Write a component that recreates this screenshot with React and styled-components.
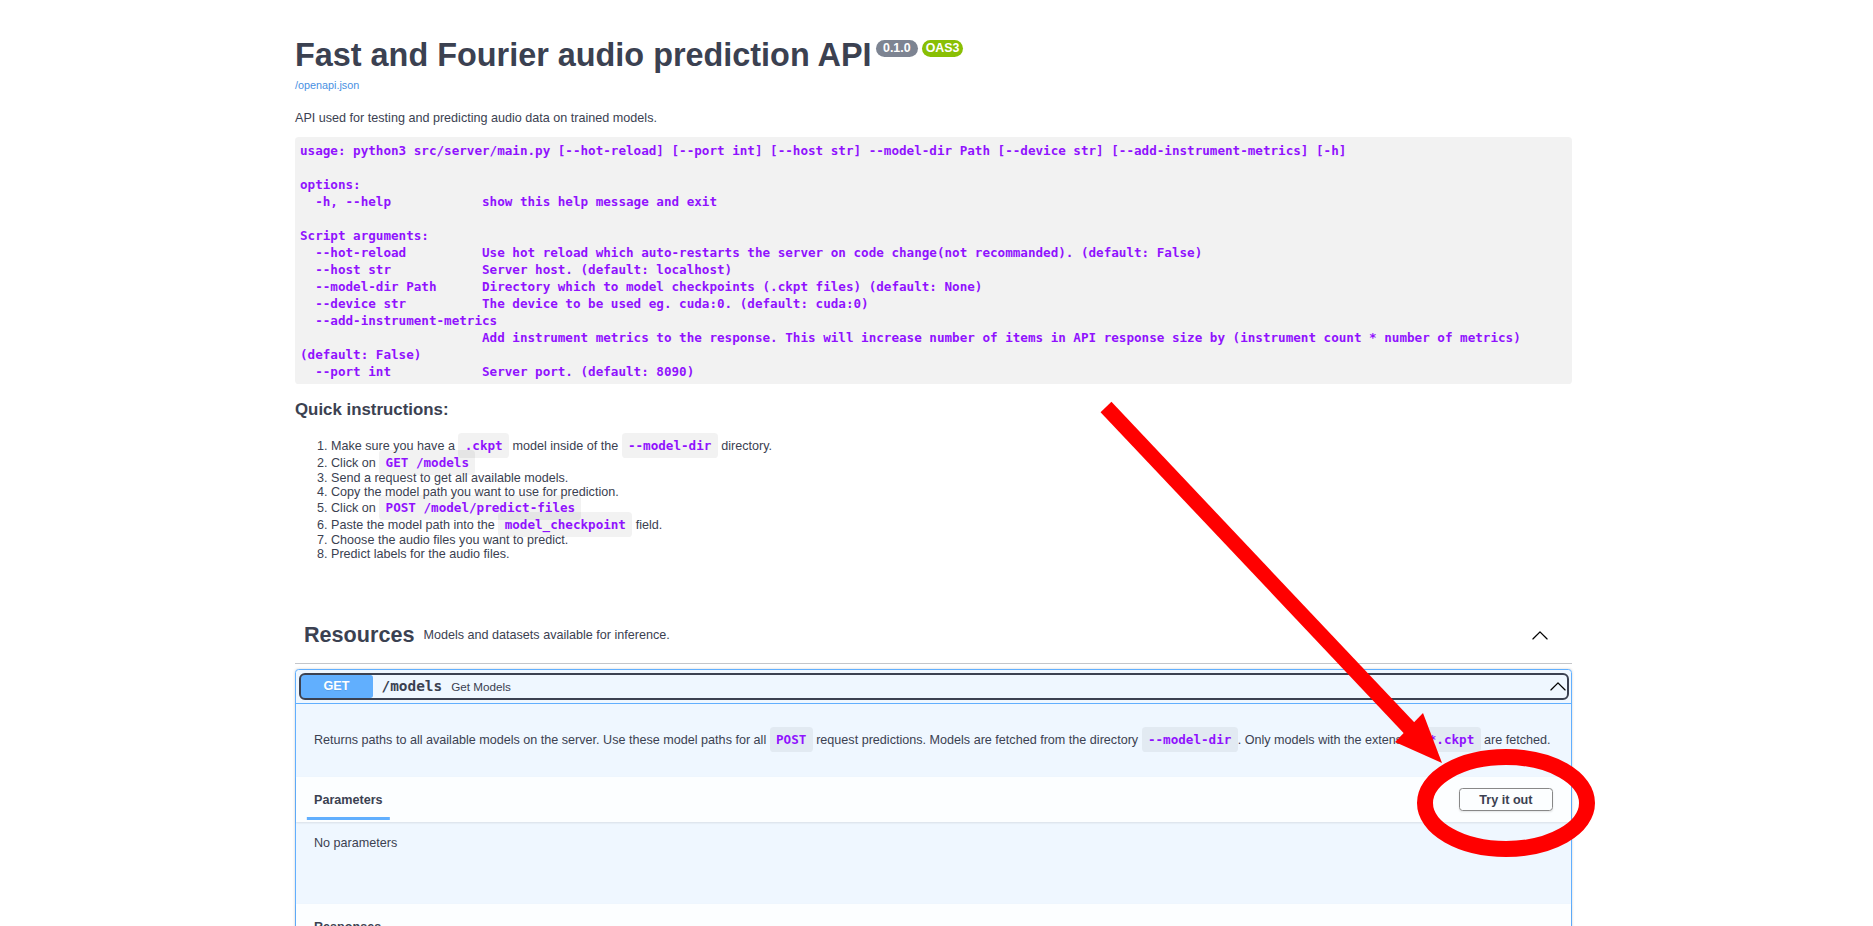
import styled, { createGlobalStyle } from "styled-components";

const GlobalStyle = createGlobalStyle`
    html, body {
        margin: 0;
        padding: 0;
        background: #fff;
        overflow: hidden;
    }
    body {
        font-family: "Liberation Sans", Arial, sans-serif;
        color: #3b4151;
    }
`;

const mono = `"DejaVu Sans Mono", "Liberation Mono", monospace`;

const Page = styled.div`
    position: relative;
    width: 1873px;
    height: 926px;
    overflow: hidden;
`;

const Wrapper = styled.div`
    width: 1277px;
    margin-left: 295px;
`;

const Info = styled.div`
    padding-top: 37px;
    margin-bottom: 45px;
`;

const HGroup = styled.hgroup`
    display: block;
    margin: 0 0 18px;
`;

const Title = styled.h2`
    margin: 0;
    font-size: 32.4px;
    font-weight: 700;
    line-height: normal;
    color: #3b4151;
`;

const Badge = styled.small`
    display: inline-block;
    vertical-align: top;
    margin: 3px 0 0 4.5px;
    padding: 1.8px 3.6px;
    border-radius: 50px;
    background: ${props => props.$color};
    color: #fff;
    font-size: 12.4px;
    font-weight: 700;
    line-height: 13px;
    white-space: pre;
`;

const SpecLink = styled.a`
    display: inline-block;
    margin-top: 4.6px;
    font-size: 10.8px;
    color: #4990e2;
    text-decoration: none;
`;

const Paragraph = styled.p`
    margin: 12.6px 0;
    font-size: 12.6px;
    color: #3b4151;
`;

const CodeBlock = styled.pre`
    margin: 12.6px 0;
    padding: 4.5px 5px;
    background: rgba(0, 0, 0, 0.05);
    border-radius: 3.6px;
    font-family: ${mono};
    font-size: 12.6px;
    font-weight: 700;
    line-height: 17px;
    color: #9012fe;
    white-space: pre;
`;

const SubHeading = styled.h3`
    margin: 16px 0 16.85px;
    font-size: 16.85px;
    font-weight: 700;
    color: #3b4151;
`;

const StepList = styled.ol`
    margin: 12.6px 0;
    padding-left: 36px;
    font-size: 12.6px;
    line-height: normal;
    color: #3b4151;
`;

const Code = styled.code`
    padding: 5px 6.3px;
    border-radius: 3.6px;
    background: rgba(0, 0, 0, 0.05);
    font-family: ${mono};
    font-size: 12.6px;
    font-weight: 700;
    line-height: 17px;
    color: #9012fe;
`;

const TagHeader = styled.h3`
    display: flex;
    align-items: center;
    margin: 0 0 4.5px;
    padding: 9px 18px 9px 9px;
    border-bottom: 1px solid rgba(59, 65, 81, 0.3);
    font-size: 21.6px;
    font-weight: 700;
    color: #3b4151;
`;

const TagNote = styled.div`
    flex: 2;
    padding: 12.6px 9px;
    font-size: 12.6px;
    font-weight: 400;
    line-height: normal;
`;

const ExpandButton = styled.button`
    display: flex;
    margin: 0 5px 0 0;
    padding: 0;
    border: none;
    background: none;
    cursor: pointer;
`;

const OpBlock = styled.div`
    margin: 0 0 13.5px;
    border: 1px solid #61affe;
    border-radius: 3.6px;
    background: rgba(97, 175, 254, 0.1);
    box-shadow: 0 0 2.7px rgba(0, 0, 0, 0.19);
`;

const Summary = styled.div`
    display: flex;
    align-items: center;
    padding: 5px 4.5px;
    border-bottom: 1px solid #61affe;
`;

const SummaryControl = styled.button`
    flex: 1;
    display: flex;
    align-items: center;
    padding: 0;
    border: none;
    border-radius: 4px;
    outline: 2px solid #3b4151;
    background: transparent;
    font-family: inherit;
    text-align: left;
    cursor: pointer;
`;

const Method = styled.span`
    min-width: 72px;
    padding: 5.4px 0;
    border-radius: 2.7px;
    background: #61affe;
    color: #fff;
    font-size: 12.6px;
    font-weight: 700;
    line-height: 12.2px;
    text-align: center;
    text-shadow: 0 1px 0 rgba(0, 0, 0, 0.1);
`;

const OpPath = styled.span`
    padding: 0 9px;
    font-family: ${mono};
    font-size: 14.4px;
    font-weight: 700;
    color: #3b4151;
`;

const OpSummaryText = styled.span`
    flex: 1;
    font-size: 11.7px;
    color: #3b4151;
`;

const DescWrapper = styled.div`
    margin: 0 0 4.5px;
    padding: 15px 18px 12px;
`;

const SectionHeader = styled.div`
    box-sizing: border-box;
    display: flex;
    align-items: center;
    justify-content: space-between;
    min-height: 45px;
    padding: 7.2px 18px;
    background: rgba(255, 255, 255, 0.8);
    box-shadow: 0 1px 2px rgba(0, 0, 0, 0.1);
`;

const TabTitle = styled.h4`
    margin: 0;
    font-size: 12.6px;
    font-weight: 700;
    color: #3b4151;

    span {
        position: relative;
    }
    span::after {
        content: "";
        display: ${props => (props.$active ? "block" : "none")};
        position: absolute;
        left: 50%;
        bottom: -13.5px;
        width: 120%;
        height: 3.6px;
        background: #61affe;
        transform: translateX(-50%);
    }
`;

const TryButton = styled.button`
    padding: 3.6px 19.5px;
    border: 1.6px solid #888;
    border-radius: 3.6px;
    background: transparent;
    box-shadow: 0 1px 2px rgba(0, 0, 0, 0.1);
    font-family: inherit;
    font-size: 12.6px;
    font-weight: 700;
    color: #3b4151;
    cursor: pointer;
`;

const ParamsBody = styled.div`
    box-sizing: border-box;
    height: 82px;
    padding: 14px 18px 0;
    font-size: 12.6px;
    color: #3b4151;
`;

const Annotation = styled.svg`
    position: absolute;
    top: 0;
    left: 0;
    pointer-events: none;
`;

const ArrowUp = ({ size = 18 }) => (
    <svg width={size} height={size} viewBox="0 0 20 20" aria-hidden="true">
        <path
            fill="#000"
            d="M17.418 14.908c.272.268.709.268.979 0s.271-.701 0-.969l-7.908-7.83c-.27-.268-.707-.268-.979 0l-7.908 7.83c-.27.268-.27.701 0 .969.271.268.709.268.979 0L10 7.5l7.418 7.408z"
        />
    </svg>
);

const usage = `usage: python3 src/server/main.py [--hot-reload] [--port int] [--host str] --model-dir Path [--device str] [--add-instrument-metrics] [-h]

options:
  -h, --help            show this help message and exit

Script arguments:
  --hot-reload          Use hot reload which auto-restarts the server on code change(not recommanded). (default: False)
  --host str            Server host. (default: localhost)
  --model-dir Path      Directory which to model checkpoints (.ckpt files) (default: None)
  --device str          The device to be used eg. cuda:0. (default: cuda:0)
  --add-instrument-metrics
                        Add instrument metrics to the response. This will increase number of items in API response size by (instrument count * number of metrics)
(default: False)
  --port int            Server port. (default: 8090)`;

const App = () => {
    return (
        <Page>
            <GlobalStyle />
            <Wrapper>
                <Info>
                    <HGroup>
                        <Title>
                            Fast and Fourier audio prediction API
                            <Badge $color="#7d8492">{" 0.1.0 "}</Badge>
                            <Badge $color="#89bf04">OAS3</Badge>
                        </Title>
                        <SpecLink href="#">/openapi.json</SpecLink>
                    </HGroup>
                    <Paragraph>API used for testing and predicting audio data on trained models.</Paragraph>
                    <CodeBlock>{usage}</CodeBlock>
                    <SubHeading>Quick instructions:</SubHeading>
                    <StepList>
                        <li>Make sure you have a <Code>.ckpt</Code> model inside of the <Code>--model-dir</Code> directory.</li>
                        <li>Click on <Code>GET /models</Code></li>
                        <li>Send a request to get all available models.</li>
                        <li>Copy the model path you want to use for prediction.</li>
                        <li>Click on <Code>POST /model/predict-files</Code></li>
                        <li>Paste the model path into the <Code>model_checkpoint</Code> field.</li>
                        <li>Choose the audio files you want to predict.</li>
                        <li>Predict labels for the audio files.</li>
                    </StepList>
                </Info>

                <TagHeader>
                    <span>Resources</span>
                    <TagNote>Models and datasets available for inference.</TagNote>
                    <ExpandButton><ArrowUp /></ExpandButton>
                </TagHeader>

                <OpBlock>
                    <Summary>
                        <SummaryControl>
                            <Method>GET</Method>
                            <OpPath>/models</OpPath>
                            <OpSummaryText>Get Models</OpSummaryText>
                            <ArrowUp />
                        </SummaryControl>
                    </Summary>
                    <DescWrapper>
                        <Paragraph>
                            Returns paths to all available models on the server. Use these model paths for all <Code>POST</Code> request predictions. Models are fetched from the directory <Code>--model-dir</Code>. Only models with the extension <Code>*.ckpt</Code> are fetched.
                        </Paragraph>
                    </DescWrapper>
                    <SectionHeader>
                        <TabTitle $active><span>Parameters</span></TabTitle>
                        <TryButton>Try it out</TryButton>
                    </SectionHeader>
                    <ParamsBody>No parameters</ParamsBody>
                    <SectionHeader>
                        <TabTitle><span>Responses</span></TabTitle>
                    </SectionHeader>
                </OpBlock>
            </Wrapper>

            <Annotation width="1873" height="926" viewBox="0 0 1873 926">
                <line x1="1106" y1="407" x2="1414" y2="733" stroke="#ff0000" strokeWidth="15" />
                <polygon points="1442,763 1423,713 1395,742" fill="#ff0000" />
                <ellipse cx="1506" cy="803" rx="81" ry="46" fill="none" stroke="#ff0000" strokeWidth="16" />
            </Annotation>
        </Page>
    );
};

export default App;
